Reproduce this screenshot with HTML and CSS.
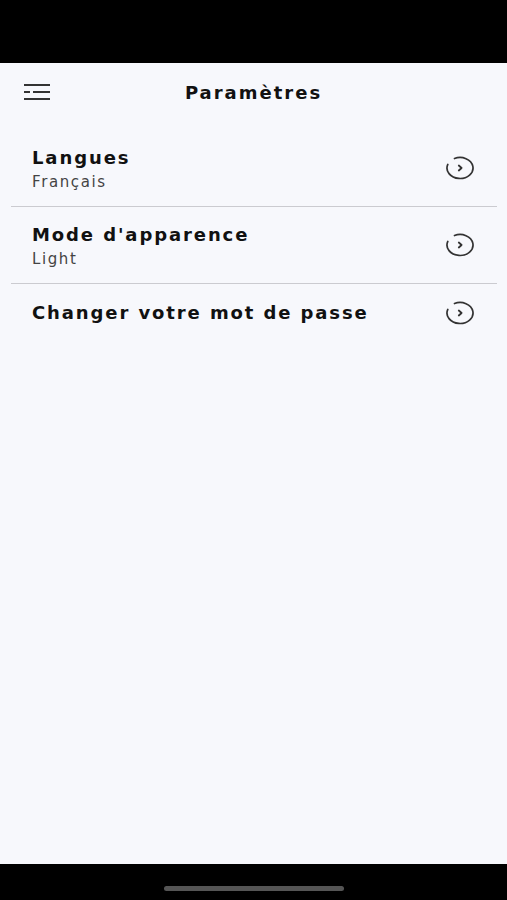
FILE: index.html
```html
<!DOCTYPE html>
<html lang="fr">
<head>
    <meta charset="UTF-8">
    <meta name="viewport" content="width=device-width, initial-scale=1.0">
    <title>Paramètres</title>
    <link rel="stylesheet" href="styles.css">
</head>
<body>

    <div class="phone">
        <!-- Status bar -->
        <div class="status-bar"></div>

        <div class="screen">
            <!-- Top header -->
            <div class="header">
                <button class="menu-btn" aria-label="Menu">
                    <svg width="26" height="16" viewBox="0 0 26 16">
                        <path d="M0 1 H26 M0 8 H6 M9 8 H26 M0 15 H26" stroke="#333" stroke-width="1.9" fill="none"/>
                    </svg>
                </button>
                <h1>Paramètres</h1>
                <div class="spacer"></div>
            </div>

            <!-- Settings list -->
            <ul class="settings">
                <li class="row">
                    <div class="label">
                        <div class="title">Langues</div>
                        <div class="value">Français</div>
                    </div>
                    <svg class="go" width="30" height="24" viewBox="0 0 30 24">
                        <path d="M9.5 2.5 A13 10.5 0 1 1 2.8 8.4" stroke="#333" stroke-width="1.7" fill="none" stroke-linecap="round"/>
                        <path d="M13.8 9.5 L16.6 12 L13.8 14.5" stroke="#333" stroke-width="1.8" fill="none" stroke-linecap="round" stroke-linejoin="round"/>
                    </svg>
                </li>
                <li class="row">
                    <div class="label">
                        <div class="title">Mode d'apparence</div>
                        <div class="value">Light</div>
                    </div>
                    <svg class="go" width="30" height="24" viewBox="0 0 30 24">
                        <path d="M9.5 2.5 A13 10.5 0 1 1 2.8 8.4" stroke="#333" stroke-width="1.7" fill="none" stroke-linecap="round"/>
                        <path d="M13.8 9.5 L16.6 12 L13.8 14.5" stroke="#333" stroke-width="1.8" fill="none" stroke-linecap="round" stroke-linejoin="round"/>
                    </svg>
                </li>
                <li class="row single">
                    <div class="label">
                        <div class="title">Changer votre mot de passe</div>
                    </div>
                    <svg class="go" width="30" height="24" viewBox="0 0 30 24">
                        <path d="M9.5 2.5 A13 10.5 0 1 1 2.8 8.4" stroke="#333" stroke-width="1.7" fill="none" stroke-linecap="round"/>
                        <path d="M13.8 9.5 L16.6 12 L13.8 14.5" stroke="#333" stroke-width="1.8" fill="none" stroke-linecap="round" stroke-linejoin="round"/>
                    </svg>
                </li>
            </ul>
        </div>

        <!-- Navigation bar -->
        <div class="nav-bar">
            <div class="home-indicator"></div>
        </div>
    </div>

</body>
</html>
```

FILE: styles.css
```css
body {
    margin: 0;
    padding: 0;
    font-family: "DejaVu Sans", "Noto Sans", sans-serif;
    background-color: #000;
    color: #111;
}

.phone {
    display: flex;
    flex-direction: column;
    height: 900px;
}

.status-bar {
    height: 63px;
    background-color: #000;
}

.screen {
    flex: 1;
    background-color: #f7f8fc;
}

/* Header with menu and title */
.header {
    display: flex;
    align-items: center;
    justify-content: space-between;
    height: 58px;
    padding: 0 24px;
}

.menu-btn {
    background: none;
    border: none;
    padding: 0;
    width: 26px;
    height: 16px;
    display: flex;
}

.header h1 {
    margin: 0;
    font-size: 18px;
    font-weight: 600;
    letter-spacing: 2px;
    color: #111;
}

.spacer {
    width: 26px;
}

/* Settings rows */
.settings {
    list-style: none;
    margin: 9px 10px 0 11px;
    padding: 0;
}

.row {
    display: flex;
    align-items: center;
    justify-content: space-between;
    height: 76px;
    padding: 0 22px 0 21px;
    border-bottom: 1px solid #cbcbd0;
}

.row.single {
    border-bottom: none;
    height: 58px;
}

.label {
    padding-top: 3px;
}

.row.single .label {
    padding-top: 0;
}

.title {
    font-size: 18px;
    font-weight: 600;
    line-height: 24px;
    letter-spacing: 1.9px;
}

.value {
    margin-top: 1px;
    font-size: 15px;
    line-height: 22px;
    letter-spacing: 1.6px;
    color: #444;
}

.go {
    display: block;
}

/* Bottom navigation bar */
.nav-bar {
    height: 36px;
    background-color: #000;
    display: flex;
    justify-content: center;
    padding-top: 22px;
    box-sizing: border-box;
}

.home-indicator {
    width: 180px;
    height: 5px;
    border-radius: 3px;
    background-color: #555;
}
```
